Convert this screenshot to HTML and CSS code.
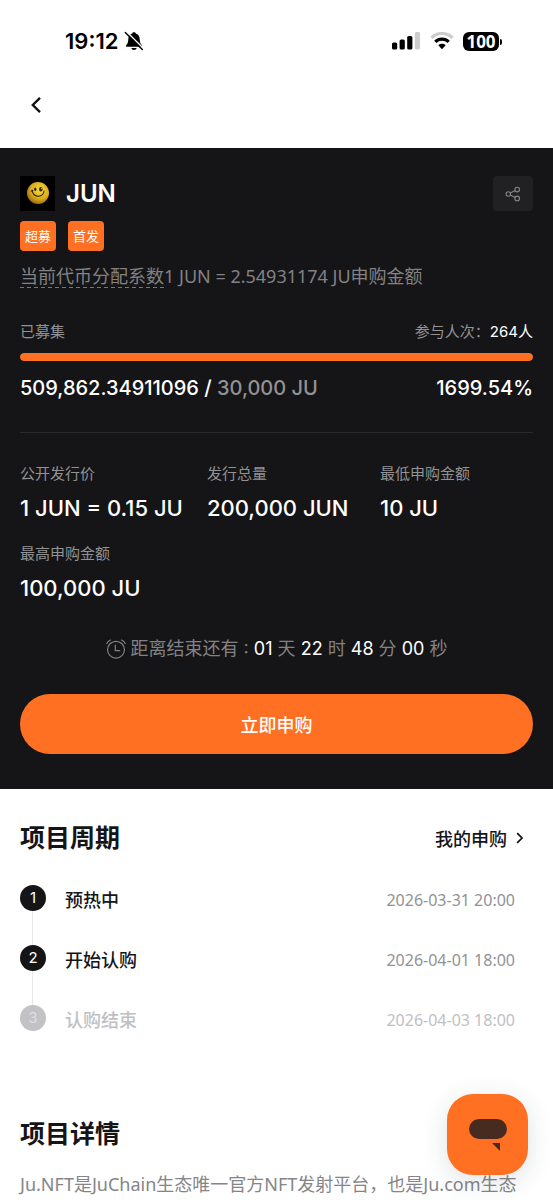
FILE: index.html
```html
<!DOCTYPE html>
<html lang="zh-CN">
<head>
<meta charset="utf-8">
<meta name="viewport" content="width=device-width, initial-scale=1">
<title>JUN</title>
<link rel="stylesheet" href="styles.css">
</head>
<body>
<div class="status">
  <div class="status-side">
    <span class="clock">19:12</span>
    <svg width="20" height="20" viewBox="0 0 20 20" aria-hidden="true">
      <path d="M10 1.2c.9 0 1.6.5 1.8 1.3 2.5.8 3.8 2.8 3.9 5.5.1 3.2.7 4.6 2 5.9.8.9.4 1.8-.7 1.8H3c-1.1 0-1.5-.9-.7-1.8 1.3-1.3 1.900-2.700 2-5.900.1-2.700 1.400-4.700 3.900-5.500C8.400 1.700 9.100 1.200 10 1.200zM7.300 16.900h5.400c-.3 1.200-1.300 2-2.700 2s-2.400-.8-2.700-2z" fill="#000"/>
      <path d="M2.7 .8l17 17" stroke="#fff" stroke-width="1.4"/>
      <path d="M1.3 1.5l17 17" stroke="#000" stroke-width="1.5" stroke-linecap="round"/>
    </svg>
  </div>
  <div class="status-side status-right">
    <svg width="29" height="18" viewBox="0 0 29 18" aria-hidden="true">
      <rect x="0" y="10.5" width="5.2" height="7" rx="1.5"/>
      <rect x="7.6" y="7.5" width="5.2" height="10" rx="1.5"/>
      <rect x="15.2" y="4" width="5.2" height="13.5" rx="1.5"/>
      <rect x="22.8" y="0" width="5.2" height="17.5" rx="1.5" fill="#ccc"/>
    </svg>
    <svg width="24" height="18" viewBox="0 0 24 18" aria-hidden="true">
      <path d="M1.5 5.8a15 15 0 0 1 21 0" fill="none" stroke="#ccc" stroke-width="3.2"/>
      <path d="M5.3 9.9a9.7 9.7 0 0 1 13.4 0" fill="none" stroke="#000" stroke-width="3.2"/>
      <path d="M8.3 13.3a5.5 5.5 0 0 1 7.4 0L12 17.3z"/>
    </svg>
    <span class="battery">100</span>
  </div>
</div>
<nav class="nav">
  <button class="back" type="button" aria-label="返回">
    <svg width="12" height="18" viewBox="0 0 12 18"><path d="M10 1.8L2.8 9l7.2 7.2" fill="none" stroke="#111" stroke-width="2.4"/></svg>
  </button>
</nav>

<main>
<section class="hero">
  <div class="title-row">
    <svg class="logo" width="35" height="35" viewBox="0 0 35 35" aria-hidden="true">
      <defs><radialGradient id="ball" cx=".6" cy=".35" r=".7"><stop offset="0" stop-color="#f6dc3c"/><stop offset=".6" stop-color="#dba91a"/><stop offset="1" stop-color="#94670c"/></radialGradient></defs>
      <rect width="35" height="35" fill="#000"/>
      <circle cx="18" cy="17" r="11" fill="url(#ball)"/>
      <path d="M12 14.500q1.500 6 6.500 5.700t5.500-5.200M11.200 15l1.700-.8" fill="none" stroke="#2e2106" stroke-width="1.1" stroke-linecap="round"/>
      <ellipse cx="15.3" cy="13.3" rx="1.1" ry="1.7" fill="#2e2106"/>
      <ellipse cx="20.8" cy="13.3" rx="1.7" ry="2.3" fill="#2e2106"/>
      <circle cx="21.4" cy="12.7" r=".6" fill="#e8c548"/>
    </svg>
    <h1 class="name">JUN</h1>
    <button class="share" type="button" aria-label="分享">
      <svg width="16" height="16" viewBox="0 0 16 16" fill="none" stroke="#858587" stroke-width="1.1"><circle cx="3.3" cy="8" r="2.2"/><circle cx="12.2" cy="3.6" r="2.3"/><circle cx="12.2" cy="12.4" r="2.3"/><path d="M5.3 7l4.8-2.4M5.3 9l4.8 2.4"/></svg>
    </button>
  </div>
  <div class="tags"><span class="tag">超募</span><span class="tag">首发</span></div>
  <p class="rate"><span class="dashed">当前代币分配系数</span>1 JUN = 2.54931174 JU申购金额</p>

  <div class="row small"><span>已募集</span><span>参与人次：<span class="light">264人</span></span></div>
  <div class="bar" role="progressbar" aria-label="已募集" aria-valuenow="100" aria-valuemin="0" aria-valuemax="100"><div class="bar-fill"></div></div>
  <div class="row amount"><span>509,862.34911096 / <span class="muted">30,000 JU</span></span><span>1699.54%</span></div>

  <dl class="stats">
    <div><dt>公开发行价</dt><dd>1 JUN = 0.15 JU</dd></div>
    <div><dt>发行总量</dt><dd>200,000 JUN</dd></div>
    <div><dt>最低申购金额</dt><dd>10 JU</dd></div>
    <div><dt>最高申购金额</dt><dd>100,000 JU</dd></div>
  </dl>

  <div class="countdown">
    <svg width="20" height="20" viewBox="0 0 20 20" fill="none" stroke="#828284" stroke-width="1.2" stroke-linecap="round" aria-hidden="true"><circle cx="10" cy="10.7" r="8.4"/><path d="M9.3 6v5.7h4.5M.8 4.500Q2 2 4.500 1M19.200 4.500Q18 2 15.500 1"/></svg>
    <span>距离结束还有 : <b>01</b> 天 <b>22</b> 时 <b>48</b> 分 <b>00</b> 秒</span>
  </div>
  <button class="buy" type="button">立即申购</button>
</section>

<section class="cycle">
  <div class="row head">
    <h2>项目周期</h2>
    <a class="mine" href="#mine">我的申购
      <svg width="8" height="12" viewBox="0 0 8 12" aria-hidden="true"><path d="M1.2 1.2L6 6l-4.800 4.800" fill="none" stroke="#111" stroke-width="1.7"/></svg>
    </a>
  </div>
  <ol class="steps">
    <li><span class="dot">1</span><span class="step-name">预热中</span><time>2026-03-31 20:00</time></li>
    <li><span class="dot">2</span><span class="step-name">开始认购</span><time>2026-04-01 18:00</time></li>
    <li class="pending"><span class="dot">3</span><span class="step-name">认购结束</span><time>2026-04-03 18:00</time></li>
  </ol>
</section>

<section class="detail">
  <h2>项目详情</h2>
  <p>Ju.NFT是JuChain生态唯一官方NFT发射平台，也是Ju.com生态</p>
</section>
</main>

<button class="chat" type="button" aria-label="客服">
  <svg width="40" height="34" viewBox="0 0 40 34"><rect x="1" y="1" width="38" height="20" rx="10" fill="#472b20"/><path d="M24 25h8v8z" fill="#472b20"/></svg>
</button>
</body>
</html>
```
FILE: styles.css
```css
* { box-sizing: border-box; }
body, h1, h2, p, dl, dd, ol { margin: 0; padding: 0; }
body {
  background: #fff;
  color: #151517;
  font-family: Inter, "Noto Sans CJK SC", sans-serif;
  font-size: 18px;
}
button { border: 0; padding: 0; font: inherit; cursor: pointer; }
svg { display: block; flex: none; }
b { font-weight: 400; color: #fff; }

.status {
  display: flex;
  justify-content: space-between;
  align-items: center;
  height: 82px;
  padding: 0 54px 0 65px;
  color: #000;
}
.status-side { display: flex; align-items: center; gap: 6px; }
.status-right { gap: 9px; }
.clock { font-size: 22px; font-weight: 600; line-height: 28px; }
.battery {
  position: relative;
  width: 36px;
  border-radius: 6px;
  background: #000;
  color: #fff;
  font-family: "Open Sans", sans-serif;
  font-size: 17px;
  font-weight: 700;
  line-height: 19px;
  text-align: center;
}
.battery::after {
  content: "";
  position: absolute;
  right: -3px;
  top: 7px;
  width: 2px;
  height: 6px;
  border-radius: 0 2px 2px 0;
  background: #000;
}
.nav { height: 66px; padding: 6px 20px; }
.back { display: grid; place-items: center; width: 32px; height: 34px; background: none; }

.hero { padding: 28px 20px 35px; background: #151517; color: #fff; }
.title-row { display: flex; align-items: center; gap: 11px; height: 35px; }
.name { font-size: 24px; font-weight: 600; line-height: 34px; }
.share {
  display: grid;
  place-items: center;
  width: 40px;
  height: 35px;
  margin-left: auto;
  border-radius: 4px;
  background: #212123;
}
.tags { display: flex; gap: 12px; margin-top: 10px; }
.tag {
  padding: 0 5px;
  border-radius: 4px;
  background: #ff7022;
  font-size: 13px;
  line-height: 30px;
}
.rate, .detail p, .steps time { font-family: "Noto Sans", "Noto Sans CJK SC", sans-serif; }
.rate { margin-top: 12px; color: #828284; font-size: 18px; line-height: 26px; }
.dashed {
  background: repeating-linear-gradient(90deg, #77777a 0 4px, transparent 4px 7px) left bottom / 100% 1px no-repeat;
}
.row { display: flex; justify-content: space-between; align-items: center; }
.small { margin-top: 31px; color: #929294; font-size: 15px; line-height: 24px; }
.light { color: #fff; }
.bar { height: 8px; margin-top: 9px; border-radius: 4px; background: #2a2a2c; overflow: hidden; }
.bar-fill { height: 100%; border-radius: 4px; background: #ff7022; }
.amount { margin-top: 13px; font-size: 20px; font-weight: 500; line-height: 28px; }
.muted { color: #929294; }
.stats {
  display: grid;
  grid-template-columns: 187fr 173fr 153fr;
  row-gap: 18px;
  margin-top: 30px;
  padding-top: 29px;
  border-top: 1px solid #29292b;
}
.stats dt { color: #929294; font-size: 15px; line-height: 24px; }
.stats dd { margin-top: 6px; font-size: 22px; font-weight: 500; line-height: 32px; white-space: nowrap; }
.countdown {
  display: flex;
  justify-content: center;
  align-items: center;
  gap: 5px;
  margin-top: 31px;
  color: #828284;
  line-height: 28px;
}
.buy {
  display: block;
  width: 100%;
  height: 60px;
  margin-top: 31px;
  border-radius: 30px;
  background: #ff7022;
  color: #fff;
  font-weight: 500;
}

h2 { font-size: 25px; font-weight: 700; line-height: 36px; }
.cycle { padding: 31px 20px 0; }
.mine {
  display: flex;
  align-items: center;
  gap: 9px;
  padding-right: 9px;
  color: inherit;
  font-weight: 500;
  text-decoration: none;
}
.steps { margin-top: 29px; list-style: none; }
.steps li { position: relative; display: flex; align-items: flex-start; height: 60px; padding-right: 18px; line-height: 32px; }
.steps li:not(:last-child)::before {
  content: "";
  position: absolute;
  left: 12px;
  top: 26px;
  bottom: 0;
  width: 1px;
  background: #e8e8ea;
}
.dot {
  width: 26px;
  margin-right: 19px;
  border-radius: 50%;
  background: #151517;
  color: #fff;
  font-size: 15px;
  line-height: 26px;
  text-align: center;
}
.step-name { flex: 1; font-weight: 500; }
.steps time { color: #929296; font-size: 16px; line-height: 30px; }
.pending .dot { background: #c2c2c6; color: #dedee1; }
.pending .step-name, .steps .pending time { color: #c0c0c4; }
.detail { padding: 51px 20px 0; }
.detail p { margin-top: 18px; color: #858589; font-size: 18px; line-height: 28px; }

.chat {
  position: fixed;
  right: 25px;
  bottom: 25px;
  display: grid;
  place-items: center;
  width: 81px;
  height: 81px;
  border-radius: 26px;
  background: #ff7022;
  box-shadow: 0 6px 26px rgba(20, 50, 60, .14);
}
```
